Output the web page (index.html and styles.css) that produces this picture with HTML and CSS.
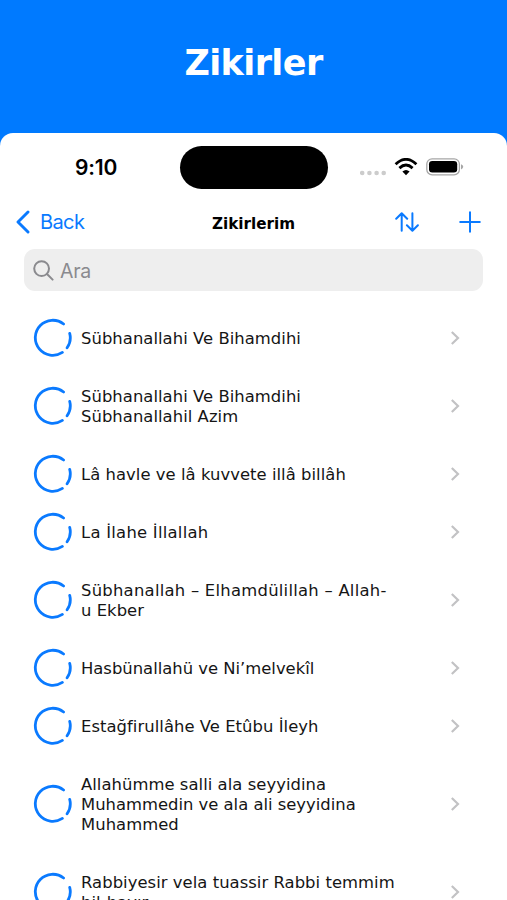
FILE: index.html
```html
<!DOCTYPE html>
<html lang="tr">
<head>
<meta charset="utf-8">
<title>Zikirler</title>
<link rel="stylesheet" href="styles.css">
</head>
<body>
<svg class="defs" width="0" height="0" aria-hidden="true">
  <symbol id="ring" viewBox="0 0 40 40"><path d="M30.6 6A17.5 17.5 0 1 0 29.4 34.4M36.7 15.4A17.5 17.5 0 0 1 34.1 29.8"/></symbol>
  <symbol id="chevron" viewBox="0 0 10 16"><path d="M1.8 2 8 8l-6.2 6"/></symbol>
</svg>
<header class="hero"><h1>Zikirler</h1></header>
<main class="phone">
  <div class="status">
    <span class="time">9:10</span>
    <span class="island"></span>
    <span class="signals">
      <svg class="dots" width="28" height="6" viewBox="0 0 28 6"><circle cx="2.2" cy="3" r="2.3"/><circle cx="9.4" cy="3" r="2.3"/><circle cx="16.6" cy="3" r="2.3"/><circle cx="23.7" cy="3" r="2.3"/></svg>
      <svg class="wifi" width="24" height="18" viewBox="0 0 24 18"><path d="M1.6 6.2Q12-3.5 22.4 6.2M5.4 10.1Q12 4 18.6 10.1"/><path class="fill" d="M8.4 13.6Q12 10.3 15.6 13.6L12 17.2z"/></svg>
      <svg class="battery" width="38" height="18" viewBox="0 0 38 18"><rect class="shell" x=".8" y=".8" width="32.6" height="16" rx="5.3"/><rect x="3" y="3" width="28.2" height="11.6" rx="3.3"/><path class="cap" d="M35 6.2q2.2.8 2.2 2.6T35 11.4z"/></svg>
    </span>
  </div>
  <nav class="bar">
    <a class="back"><svg width="14" height="24" viewBox="0 0 14 24"><path d="M12 2 2 12l10 10"/></svg><span>Back</span></a>
    <h2>Zikirlerim</h2>
    <div class="actions">
      <svg width="24" height="20" viewBox="0 0 24 20"><path d="M6.7 18.8V1.5M1.2 6.8l5.5-5.5 5.5 5.5M17.4 1.2v17.3M11.9 13.2l5.5 5.5 5.5-5.5"/></svg>
      <svg width="22" height="22" viewBox="0 0 22 22"><path d="M11 1.2v19.6M1.2 11h19.6"/></svg>
    </div>
  </nav>
  <div class="search"><svg width="21" height="21" viewBox="0 0 21 21"><circle cx="8.6" cy="8.6" r="7.4"/><path d="m14 14 5.6 5.6"/></svg><span>Ara</span></div>
  <ul class="list">
    <li><svg class="ring"><use href="#ring"/></svg><p>Sübhanallahi Ve Bihamdihi</p><svg class="chevron"><use href="#chevron"/></svg></li>
    <li><svg class="ring"><use href="#ring"/></svg><p>Sübhanallahi Ve Bihamdihi<br>Sübhanallahil Azim</p><svg class="chevron"><use href="#chevron"/></svg></li>
    <li><svg class="ring"><use href="#ring"/></svg><p>Lâ havle ve lâ kuvvete illâ billâh</p><svg class="chevron"><use href="#chevron"/></svg></li>
    <li><svg class="ring"><use href="#ring"/></svg><p class="loose">La İlahe İllallah</p><svg class="chevron"><use href="#chevron"/></svg></li>
    <li><svg class="ring"><use href="#ring"/></svg><p><span class="loose">Sübhanallah – Elhamdülillah – Allah-</span><br>u Ekber</p><svg class="chevron"><use href="#chevron"/></svg></li>
    <li><svg class="ring"><use href="#ring"/></svg><p class="tight">Hasbünallahü ve Ni’melvekîl</p><svg class="chevron"><use href="#chevron"/></svg></li>
    <li><svg class="ring"><use href="#ring"/></svg><p>Estağfirullâhe Ve Etûbu İleyh</p><svg class="chevron"><use href="#chevron"/></svg></li>
    <li><svg class="ring"><use href="#ring"/></svg><p>Allahümme salli ala seyyidina<br><span class="tight">Muhammedin ve ala ali seyyidina</span><br>Muhammed</p><svg class="chevron"><use href="#chevron"/></svg></li>
    <li><svg class="ring"><use href="#ring"/></svg><p>Rabbiyesir vela tuassir Rabbi temmim<br>bil-hayır</p><svg class="chevron"><use href="#chevron"/></svg></li>
  </ul>
</main>
</body>
</html>
```
FILE: styles.css
```css
* { box-sizing: border-box; margin: 0; padding: 0; }
body { height: 900px; overflow: hidden; background: #007aff; font-family: "DejaVu Sans", sans-serif; color: #151515; }
svg { display: block; flex: none; fill: none; stroke: #0a7aff; stroke-linecap: round; stroke-linejoin: round; }
.defs { position: absolute; }
.hero { height: 133px; padding-top: 42px; text-align: center; color: #fff; }
.hero h1 { font: bold 35px/42px "DejaVu Sans", sans-serif; letter-spacing: -0.6px; }
.phone { height: 767px; background: #fff; border-radius: 13px 13px 0 0; overflow: hidden; }
.status { height: 70px; display: grid; grid-template-columns: 180px 148px 1fr; align-items: center; }
.time { padding-left: 75px; font: 600 21px/26px Inter, sans-serif; letter-spacing: -0.2px; color: #000; }
.island { height: 43px; margin-bottom: 2px; border-radius: 22px; background: #000; }
.signals { display: flex; align-items: center; padding-left: 32px; }
.dots { margin-top: 10px; fill: #ccc; stroke: none; }
.wifi { margin: -2px 0 0 6px; stroke: #000; stroke-width: 2.8; stroke-linecap: butt; }
.wifi .fill { fill: #000; stroke: none; }
.battery { margin: -2px 0 0 8px; fill: #000; stroke: none; }
.battery .shell { fill: none; stroke: #a6a6a6; stroke-width: 1.3; }
.battery .cap { fill: #a6a6a6; }
.bar { height: 46px; padding: 0 16px 8px; display: grid; grid-template-columns: 1fr auto 1fr; align-items: center; }
.bar svg { stroke-width: 2; }
.back { display: flex; align-items: center; gap: 10px; color: #0a7aff; font: 20px/24px Inter, sans-serif; letter-spacing: -0.6px; }
.bar .back svg { stroke-width: 2.9; }
.bar h2 { font: bold 15.2px/20px "DejaVu Sans", sans-serif; color: #000; padding-top: 3px; }
.actions { display: flex; align-items: center; justify-content: flex-end; gap: 40px; padding-right: 10px; }
.search { height: 42px; margin: 0 24px; padding-left: 9px; display: flex; align-items: center; gap: 6px; border-radius: 11px; background: #eee; color: #8a8a8e; font: 19.5px/24px Inter, sans-serif; letter-spacing: -0.3px; }
.search span { padding-top: 1px; }
.search svg { stroke: #8a8a8e; stroke-width: 2; }
.list { list-style: none; padding-top: 18px; }
.list li { display: flex; align-items: center; padding: 20px 47px 18px 33px; }
.list p { flex: 1; margin-left: 8px; font-size: 16.4px; line-height: 20px; letter-spacing: 0.05px; white-space: nowrap; }
.list .loose { letter-spacing: 0.26px; }
.list .tight { letter-spacing: 0; }
.ring { width: 40px; height: 40px; margin: -11px 0 -9px; stroke-width: 2.8; }
.chevron { width: 10px; height: 16px; margin: -1px 0 1px; stroke: #c2c2c4; stroke-width: 2.2; stroke-linecap: butt; stroke-linejoin: miter; }
```
